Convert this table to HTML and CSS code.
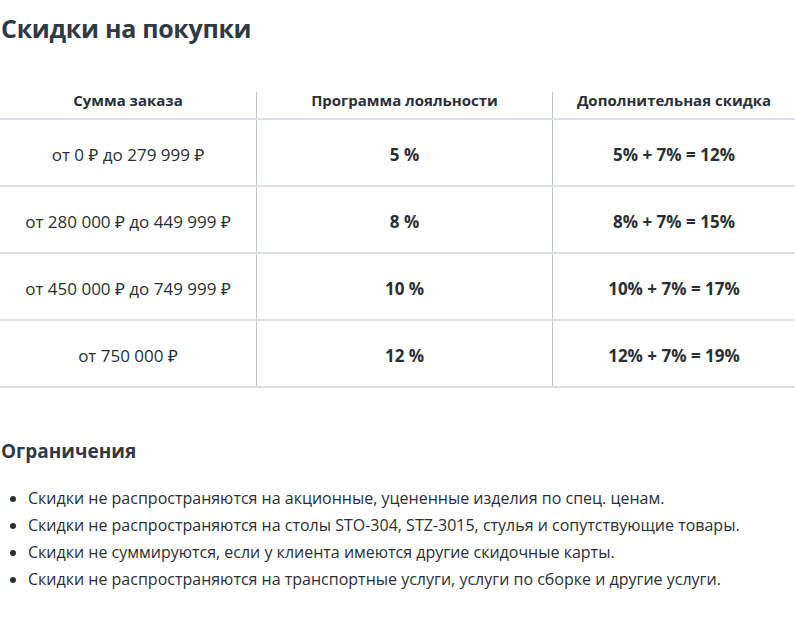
FILE: index.html
```html
<!DOCTYPE html>
<html lang="ru">
<head>
<meta charset="utf-8">
<link rel="stylesheet" href="styles.css">
</head>
<body>
<h1 class="title">Скидки на покупки</h1>
<table class="discounts">
  <thead>
    <tr>
      <th class="c1">Сумма заказа</th>
      <th class="c2">Программа лояльности</th>
      <th class="c3">Дополнительная скидка</th>
    </tr>
  </thead>
  <tbody>
    <tr><td>от 0 ₽ до 279 999 ₽</td><td class="b">5 %</td><td class="b">5% + 7% = 12%</td></tr>
    <tr><td>от 280 000 ₽ до 449 999 ₽</td><td class="b">8 %</td><td class="b">8% + 7% = 15%</td></tr>
    <tr><td>от 450 000 ₽ до 749 999 ₽</td><td class="b">10 %</td><td class="b">10% + 7% = 17%</td></tr>
    <tr><td>от 750 000 ₽</td><td class="b">12 %</td><td class="b">12% + 7% = 19%</td></tr>
  </tbody>
</table>
<h2 class="subtitle">Ограничения</h2>
<ul class="limits">
  <li>Скидки не распространяются на акционные, уцененные изделия по спец. ценам.</li>
  <li>Скидки не распространяются на столы STO-304, STZ-3015, стулья и сопутствующие товары.</li>
  <li>Скидки не суммируются, если у клиента имеются другие скидочные карты.</li>
  <li>Скидки не распространяются на транспортные услуги, услуги по сборке и другие услуги.</li>
</ul>
</body>
</html>
```
FILE: styles.css
```css
html, body {
  margin: 0;
  padding: 0;
  background: #fff;
}
body {
  font-family: "Open Sans", "Noto Sans", sans-serif;
  color: #2b2f33;
  width: 795px;
  overflow: hidden;
}
.title {
  margin: 0;
  padding: 10px 0 0 1px;
  font-size: 25px;
  line-height: 36px;
  font-weight: 700;
  color: #2f3a44;
  letter-spacing: -0.3px;
}
.discounts {
  margin-top: 46px;
  width: 795px;
  border-collapse: collapse;
  table-layout: fixed;
}
.discounts .c1 { width: 256px; }
.discounts .c2 { width: 295px; }
.discounts th {
  font-size: 15px;
  line-height: 16px;
  font-weight: 700;
  color: #2b3038;
  height: 16px;
  padding: 0 0 10px;
  vertical-align: middle;
  border-bottom: 2px solid #dde0e4;
}
.discounts th + th,
.discounts td + td {
  border-left: 1px solid #bcc4cc;
}
.discounts td {
  height: 61px;
  padding: 4px 0 0;
  text-align: center;
  font-size: 17px;
  color: #2b2f33;
  border-bottom: 2px solid #dde0e4;
}
.discounts td.b {
  font-weight: 700;
}
.subtitle {
  margin: 48px 0 0;
  padding-left: 1px;
  font-size: 19px;
  line-height: 30px;
  font-weight: 700;
  color: #2f3a44;
}
.limits {
  margin: 19px 0 0;
  padding-left: 28px;
  font-size: 16px;
  line-height: 27px;
  color: #2b2f33;
}
```
